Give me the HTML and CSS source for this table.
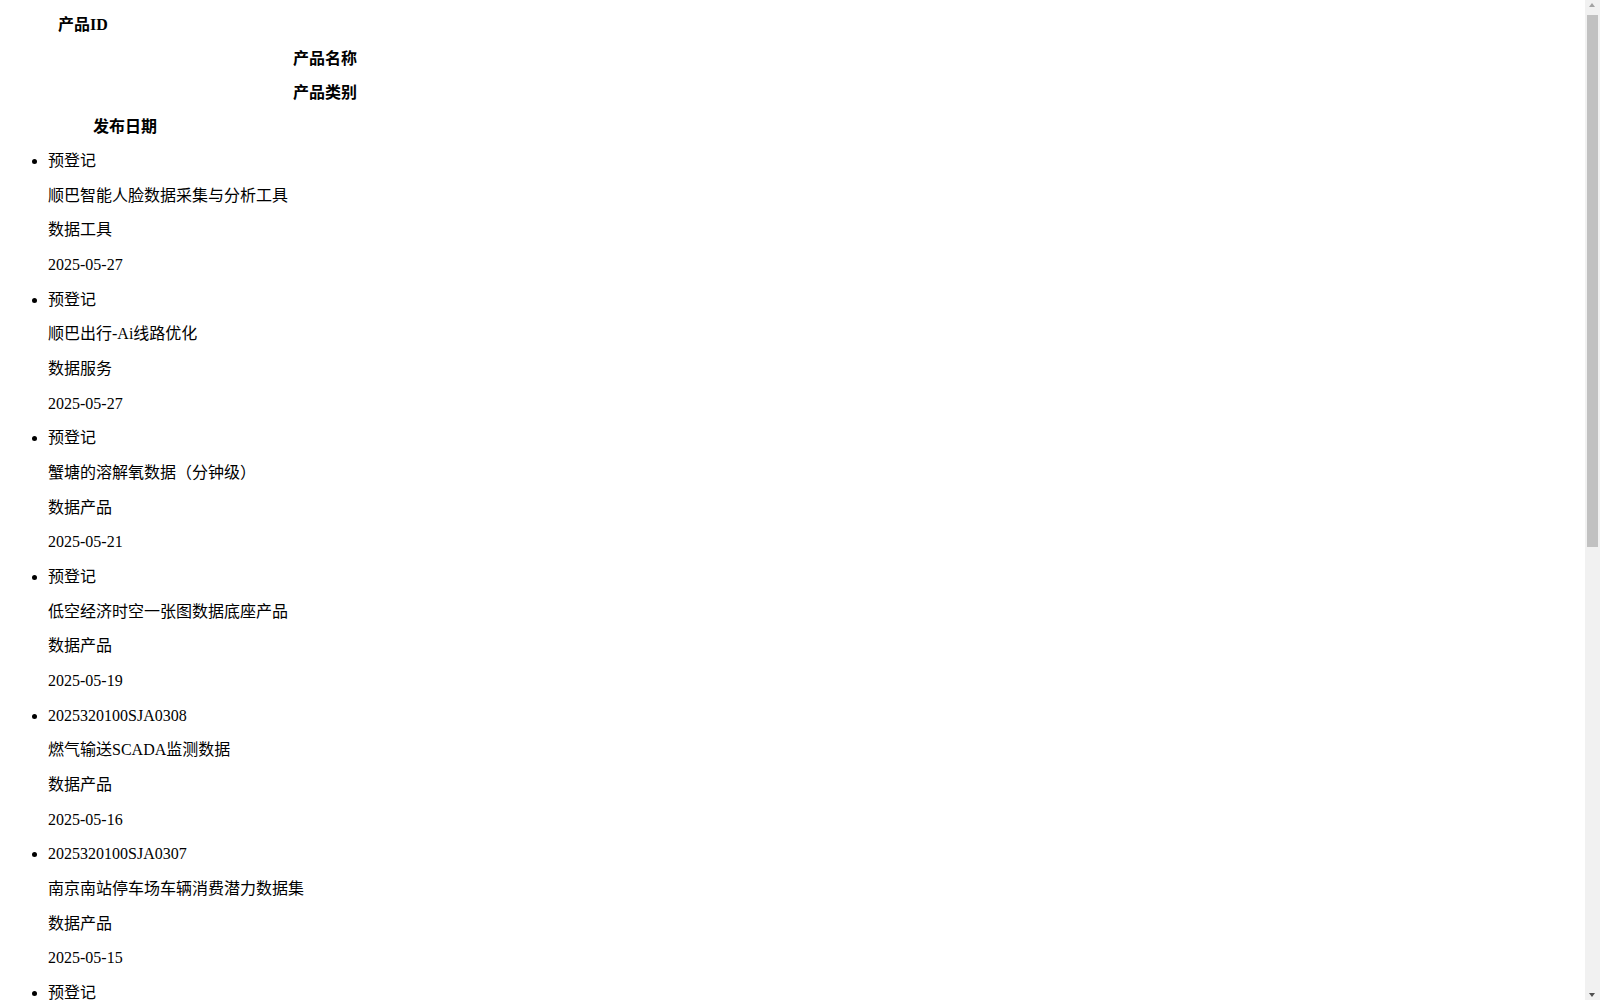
FILE: index.html
```html
<!DOCTYPE html>
<html lang="zh-CN">
<head>
<meta charset="utf-8">
<title>产品列表</title>
<link rel="stylesheet" href="styles.css">
</head>
<body>
<div class="head">
  <p class="h h-id">产品ID</p>
  <p class="h h-name">产品名称</p>
  <p class="h h-cat">产品类别</p>
  <p class="h h-date">发布日期</p>
</div>
<ul class="list">
  <li class="item"><p class="cell">预登记</p><p class="cell">顺巴智能人脸数据采集与分析工具</p><p class="cell">数据工具</p><p class="cell">2025-05-27</p></li>
  <li class="item"><p class="cell">预登记</p><p class="cell">顺巴出行-Ai线路优化</p><p class="cell">数据服务</p><p class="cell">2025-05-27</p></li>
  <li class="item"><p class="cell">预登记</p><p class="cell">蟹塘的溶解氧数据（分钟级）</p><p class="cell">数据产品</p><p class="cell">2025-05-21</p></li>
  <li class="item"><p class="cell">预登记</p><p class="cell">低空经济时空一张图数据底座产品</p><p class="cell">数据产品</p><p class="cell">2025-05-19</p></li>
  <li class="item"><p class="cell">2025320100SJA0308</p><p class="cell">燃气输送SCADA监测数据</p><p class="cell">数据产品</p><p class="cell">2025-05-16</p></li>
  <li class="item"><p class="cell">2025320100SJA0307</p><p class="cell">南京南站停车场车辆消费潜力数据集</p><p class="cell">数据产品</p><p class="cell">2025-05-15</p></li>
  <li class="item"><p class="cell">预登记</p><p class="cell">城市交通流量实时监测数据</p><p class="cell">数据产品</p><p class="cell">2025-05-14</p></li>
  <li class="item"><p class="cell">2025320100SJA0306</p><p class="cell">公共充电桩运行状态数据集</p><p class="cell">数据产品</p><p class="cell">2025-05-13</p></li>
  <li class="item"><p class="cell">2025320100SJA0305</p><p class="cell">企业用电负荷分析数据</p><p class="cell">数据产品</p><p class="cell">2025-05-12</p></li>
  <li class="item"><p class="cell">预登记</p><p class="cell">智慧园区能耗管理工具</p><p class="cell">数据工具</p><p class="cell">2025-05-09</p></li>
  <li class="item"><p class="cell">2025320100SJA0304</p><p class="cell">长江水质监测数据集</p><p class="cell">数据产品</p><p class="cell">2025-05-08</p></li>
  <li class="item"><p class="cell">2025320100SJA0303</p><p class="cell">物流车辆轨迹数据服务</p><p class="cell">数据服务</p><p class="cell">2025-05-06</p></li>
</ul>
<div class="scrollbar" aria-hidden="true">
  <span class="sb-arrow sb-up"></span>
  <span class="sb-thumb"></span>
  <span class="sb-arrow sb-down"></span>
</div>
</body>
</html>
```

FILE: styles.css
```css
html, body {
  background: #ffffff;
}
body {
  margin: 0;
  padding: 16px 23px 8px 8px;
  font-family: "Liberation Serif", "Noto Sans CJK SC", serif;
  font-size: 16px;
  color: #000000;
}
.head {
  display: block;
}
.h {
  margin: 16px 0;
  font-weight: bold;
  line-height: 17.85px;
}
.h-id {
  margin-top: 0;
  padding-left: 50px;
}
.h-name,
.h-cat {
  padding-left: 285px;
}
.h-date {
  padding-left: 85px;
}
.list {
  margin: 16.8px 0 16px;
  padding-left: 40px;
  list-style: disc;
}
.item {
  display: list-item;
}
.cell {
  margin: 16px 0;
  line-height: 18.65px;
}

/* browser scrollbar as seen in the reference */
.scrollbar {
  position: fixed;
  top: 0;
  right: 0;
  width: 15px;
  height: 100%;
  background: #f1f1f1;
}
.sb-thumb {
  position: absolute;
  top: 15px;
  left: 2px;
  width: 11px;
  height: 532px;
  background: #c1c1c1;
}
.sb-arrow {
  position: absolute;
  left: 4px;
  width: 0;
  height: 0;
  border-left: 3.5px solid transparent;
  border-right: 3.5px solid transparent;
}
.sb-up {
  top: 3px;
  border-bottom: 4px solid #a3a3a3;
}
.sb-down {
  bottom: 3px;
  border-top: 4px solid #505050;
}
```
